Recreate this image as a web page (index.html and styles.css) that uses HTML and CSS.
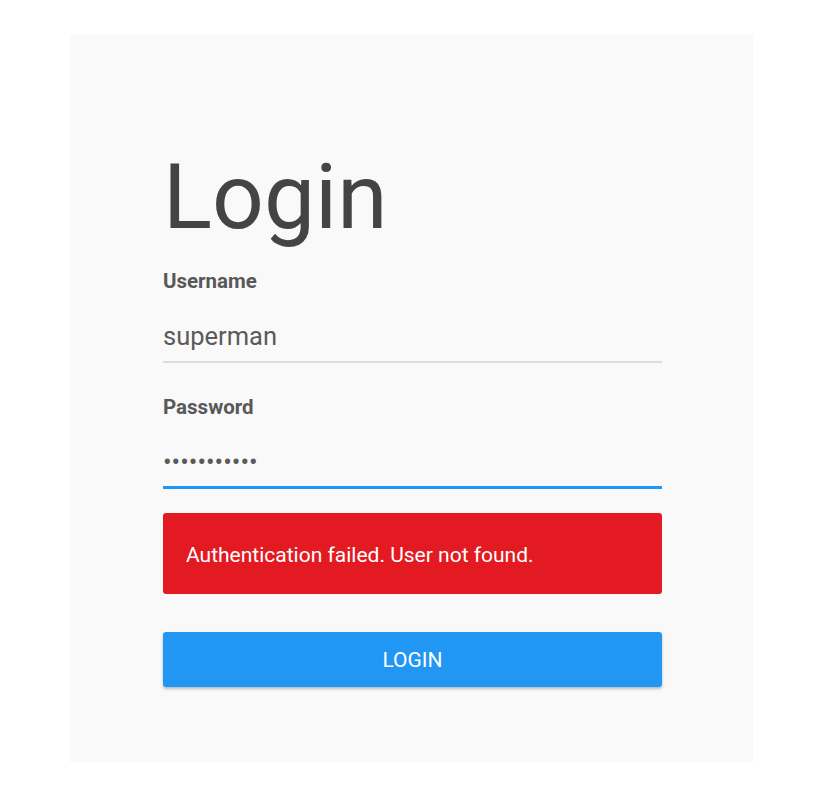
FILE: index.html
```html
<!DOCTYPE html>
<html lang="en">
<head>
    <meta charset="UTF-8">
    <meta name="viewport" content="width=device-width, initial-scale=1.0">
    <title>Login</title>
    <link rel="stylesheet" href="styles.css">
</head>
<body>
    <div class="login-panel">
        <form class="login-form" onsubmit="return false;">
            <h1 class="login-title">Login</h1>

            <label class="field-label" for="username">Username</label>
            <input class="field-input" id="username" type="text" value="superman">

            <label class="field-label password-label" for="password">Password</label>
            <input class="field-input field-focused" id="password" type="password" value="supermanpw1">

            <div class="error-box">Authentication failed. User not found.</div>

            <button class="login-button" type="submit">Login</button>
        </form>
    </div>
</body>
</html>
```

FILE: styles.css
```css
body {
    margin: 0;
    background-color: #ffffff;
    font-family: Roboto, "Liberation Sans", Arial, sans-serif;
}

.login-panel {
    box-sizing: border-box;
    width: 683px;
    height: 728px;
    margin: 34px 0 0 70px;
    padding: 118px 91px 0 93px;
    background-color: #f9f9f9;
}

.login-form {
    display: flex;
    flex-direction: column;
    width: 499px;
}

.login-title {
    margin: 0 0 28px 0;
    font-size: 91px;
    font-weight: 400;
    line-height: 1;
    color: #444444;
}

.field-label {
    margin-bottom: 20px;
    font-size: 20.5px;
    font-weight: 700;
    line-height: 1;
    color: #585858;
}

.password-label {
    margin-top: 34px;
}

.field-input {
    box-sizing: content-box;
    height: 49px;
    padding: 0;
    border: none;
    border-bottom: 2px solid #dcdcdc;
    background: transparent;
    font-family: Roboto, "Liberation Sans", Arial, sans-serif;
    font-size: 25.5px;
    color: #5a5a5a;
    outline: none;
}

.field-focused {
    border-bottom: 3px solid #2196f3;
}

.error-box {
    display: flex;
    align-items: center;
    height: 81px;
    margin-top: 24px;
    padding: 2px 23px 0 23px;
    box-sizing: border-box;
    border-radius: 3px;
    background-color: #e41a22;
    color: #ffffff;
    font-size: 21px;
}

.login-button {
    height: 55px;
    margin-top: 38px;
    border: none;
    border-radius: 3px;
    background-color: #2196f3;
    color: #ffffff;
    font-family: Roboto, "Liberation Sans", Arial, sans-serif;
    font-size: 21px;
    text-transform: uppercase;
    box-shadow: 0 2px 3px rgba(0, 0, 0, 0.25);
    cursor: pointer;
}
```
